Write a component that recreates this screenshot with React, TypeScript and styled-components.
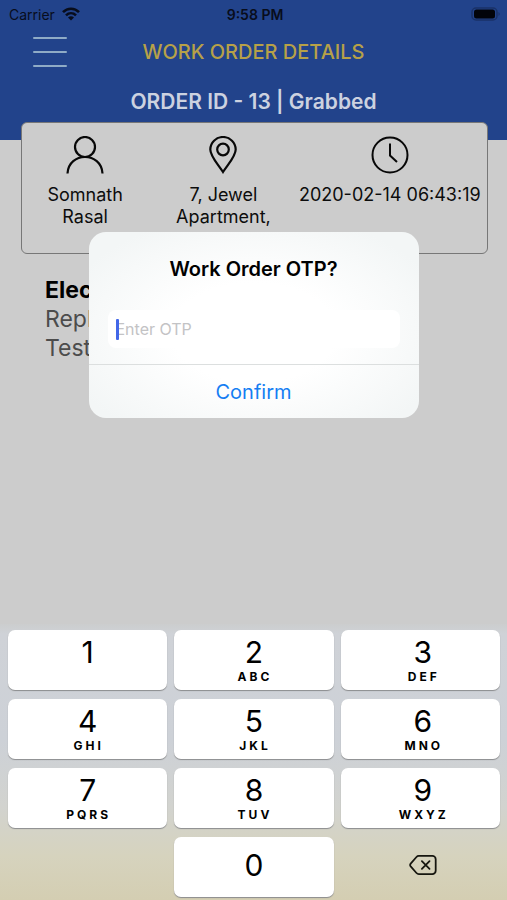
import React from 'react';
import styled, { createGlobalStyle } from 'styled-components';

const GlobalStyle = createGlobalStyle`
  * { box-sizing: border-box; }
  body {
    margin: 0;
    background: #cccccc;
    font-family: Inter, 'Liberation Sans', sans-serif;
    color: #0c0c0c;
  }
  button, input { font: inherit; color: inherit; }
  button { border: 0; padding: 0; background: none; cursor: pointer; }
  h1, h2, p { margin: 0; }
`;

const Screen = styled.div`
  min-height: 100vh;
  display: flex;
  flex-direction: column;
`;

const Content = styled.main`
  position: relative;
  flex: 1;
`;

const Header = styled.header`
  height: 140px;
  background: #22438b;
`;

const StatusBar = styled.div`
  display: grid;
  grid-template-columns: 1fr auto 1fr;
  align-items: center;
  height: 28px;
  padding: 0 6px 0 9px;
  font-size: 14px;
  color: #080d1c;
`;

const Carrier = styled.span`
  display: flex;
  align-items: center;
  gap: 7px;
`;

const Time = styled.span`
  font-weight: 600;
`;

const Battery = styled.svg`
  justify-self: end;
`;

const TitleBar = styled.div`
  display: grid;
  grid-template-columns: 36px 1fr 36px;
  align-items: center;
  height: 48px;
  padding: 0 32px;
`;

const MenuButton = styled.button`
  display: flex;
  flex-direction: column;
  align-items: center;
  gap: 12px;
`;

const MenuLine = styled.span`
  width: 34px;
  height: 2px;
  border-radius: 1px;
  background: #8fabc6;
`;

const Title = styled.h1`
  text-align: center;
  font-size: 20px;
  font-weight: 500;
  line-height: 24px;
  color: #b7a148;
`;

const OrderLine = styled.p`
  padding-top: 14px;
  text-align: center;
  font-size: 21px;
  font-weight: 600;
  line-height: 24px;
  color: #ccd2e0;
`;

const SummaryCard = styled.section`
  display: grid;
  grid-template-columns: 126fr 150fr 182fr;
  height: 132px;
  margin: -18px 19px 0 21px;
  padding-right: 6px;
  border: 1px solid #777777;
  border-radius: 6px;
  background: #cccccc;
`;

const SummaryItem = styled.div<{ $inset: number }>`
  display: flex;
  flex-direction: column;
  align-items: center;
  gap: 10px;
  padding: 13px ${(p) => p.$inset}px 0;
  text-align: center;
  font-size: 18px;
  line-height: 22px;
  white-space: ${(p) => (p.$inset ? 'normal' : 'nowrap')};
`;

const Job = styled.section`
  padding: 21px 45px;
  font-size: 23px;
  line-height: 29px;
  color: #4c4c4c;
`;

const JobTitle = styled.h2`
  font-size: 23px;
  font-weight: 700;
  line-height: 30px;
  color: #000000;
`;

const Overlay = styled.div`
  position: absolute;
  inset: 0;
  display: flex;
  align-items: center;
  justify-content: center;
  padding: 26px 0 0;
`;

const Dialog = styled.form`
  width: 330px;
  border-radius: 17px;
  overflow: hidden;
  background: radial-gradient(ellipse at 50% 54%, #ffffff 35%, #f3f6f6 85%);
`;

const DialogBody = styled.div`
  padding: 25px 19px 16px;
`;

const DialogTitle = styled.h2`
  margin-bottom: 29px;
  text-align: center;
  font-size: 20px;
  font-weight: 600;
  line-height: 24px;
  color: #000000;
`;

const Field = styled.label`
  position: relative;
  display: block;
  &::before {
    content: '';
    position: absolute;
    left: 8px;
    top: 9px;
    width: 3px;
    height: 21px;
    border-radius: 1px;
    background: #4267e8;
  }
`;

const OtpInput = styled.input`
  display: block;
  width: 100%;
  height: 38px;
  padding: 0 8px;
  border: 0;
  border-radius: 8px;
  outline: 0;
  background: #ffffff;
  font-size: 16px;
  caret-color: transparent;
  &::placeholder { color: #c3c3c5; opacity: 1; }
`;

const Confirm = styled.button`
  display: block;
  width: 100%;
  height: 54px;
  border-top: 1px solid #dcdfdf;
  font-size: 20px;
  color: #157ef3;
`;

const Keyboard = styled.div`
  display: grid;
  grid-template-columns: repeat(3, 1fr);
  grid-auto-rows: 60px;
  gap: 9px 7px;
  padding: 6px 7px 3px 8px;
  background: linear-gradient(#cccdce 0, #cfd2d7 10px, #cdd1d7 42%, #d2d3cf 66%, #d6d3be 84%, #d4ceb2 100%);
`;

const Key = styled.button`
  display: flex;
  flex-direction: column;
  align-items: center;
  justify-content: center;
  border-radius: 7px;
  background: #ffffff;
  box-shadow: 0 1px 1px #8b8c8e;
  color: #000000;
  &:nth-child(3n) { padding-left: 5px; }
`;

const Digit = styled.span`
  font-size: 30px;
  line-height: 33px;
`;

const Letters = styled.span`
  height: 15px;
  padding-left: 2px;
  font-size: 12px;
  font-weight: 700;
  line-height: 15px;
  letter-spacing: 3px;
`;

const ZeroKey = styled(Key)`
  padding-bottom: 3px;
`;

const DeleteKey = styled.button`
  display: flex;
  align-items: center;
  justify-content: center;
  padding: 0 0 4px 6px;
`;

const WifiIcon = () => (
  <svg width="18" height="14" viewBox="0 0 18 14" fill="none" stroke="#080d1c" strokeWidth="2.6" aria-hidden="true">
    <path d="M1 5.2C5.500 .6 12.500 .6 17 5.200" />
    <path d="M4 8.400C6.900 5.600 11.100 5.600 14 8.400" />
    <path d="M9 13.500 6 10.400C7.700 8.900 10.300 8.900 12 10.400Z" fill="#080d1c" stroke="none" />
  </svg>
);

const UserIcon = () => (
  <svg width="38" height="38" viewBox="0 0 38 38" fill="none" stroke="#080808" strokeWidth="2.2" aria-hidden="true">
    <circle cx="19" cy="11" r="10" />
    <path d="M1.500 37.500C2.500 15.500 35.500 15.500 36.500 37.500" />
  </svg>
);

const PinIcon = () => (
  <svg width="38" height="38" viewBox="0 0 38 38" fill="none" stroke="#080808" strokeWidth="2.200" aria-hidden="true">
    <path d="M19 36C14 28 6.300 20.500 6.300 13.500A12.700 12.500 0 0 1 31.700 13.500C31.700 20.500 24 28 19 36Z" />
    <circle cx="19" cy="13.500" r="5.800" />
  </svg>
);

const ClockIcon = () => (
  <svg width="38" height="38" viewBox="0 0 38 38" fill="none" stroke="#080808" strokeWidth="2" aria-hidden="true">
    <circle cx="19" cy="19" r="17.500" />
    <path d="M19 7.500V19.500L26 26" />
  </svg>
);

const DeleteIcon = () => (
  <svg width="28" height="22" viewBox="0 0 30 22" fill="none" stroke="#16160f" strokeWidth="1.900" strokeLinejoin="round" strokeLinecap="round" aria-hidden="true">
    <path d="M10.500 1.300H25A3.600 3.600 0 0 1 28.600 4.900V17.100A3.600 3.600 0 0 1 25 20.700H10.500Q9 20.700 8 19.600L1.800 12.500Q.6 11 1.800 9.500L8 2.400Q9 1.300 10.500 1.300Z" />
    <path d="M13.800 6.800L22 15.200M22 6.800L13.800 15.200" />
  </svg>
);

const keys: [string, string][] = [
  ['1', ''],
  ['2', 'ABC'],
  ['3', 'DEF'],
  ['4', 'GHI'],
  ['5', 'JKL'],
  ['6', 'MNO'],
  ['7', 'PQRS'],
  ['8', 'TUV'],
  ['9', 'WXYZ'],
];

export default function App() {
  return (
    <Screen>
      <GlobalStyle />
      <Content>
        <Header>
          <StatusBar>
            <Carrier>Carrier <WifiIcon /></Carrier>
            <Time>9:58 PM</Time>
            <Battery width="30" height="14" viewBox="0 0 30 14" aria-hidden="true">
              <rect x="1" y="1" width="25" height="12" rx="4" fill="none" stroke="#1a3268" strokeWidth="1.500" />
              <rect x="3" y="2.500" width="21" height="9" rx="2.500" fill="#02040a" />
              <path d="M27.500 5Q30 7 27.500 9Z" fill="#1a3268" />
            </Battery>
          </StatusBar>
          <TitleBar>
            <MenuButton aria-label="Menu">
              <MenuLine />
              <MenuLine />
              <MenuLine />
            </MenuButton>
            <Title>WORK ORDER DETAILS</Title>
          </TitleBar>
          <OrderLine>ORDER ID - 13 | Grabbed</OrderLine>
        </Header>
        <SummaryCard>
          <SummaryItem $inset={24}>
            <UserIcon />
            Somnath Rasal
          </SummaryItem>
          <SummaryItem $inset={24}>
            <PinIcon />
            7, Jewel Apartment,
          </SummaryItem>
          <SummaryItem $inset={0}>
            <ClockIcon />
            2020-02-14 06:43:19
          </SummaryItem>
        </SummaryCard>
        <Job>
          <JobTitle>Electrical</JobTitle>
          <p>Replace</p>
          <p>Test</p>
        </Job>
        <Overlay>
          <Dialog role="dialog" aria-labelledby="otp-title" onSubmit={(e) => e.preventDefault()}>
            <DialogBody>
              <DialogTitle id="otp-title">Work Order OTP?</DialogTitle>
              <Field>
                <OtpInput aria-label="Enter OTP" inputMode="numeric" placeholder="Enter OTP" />
              </Field>
            </DialogBody>
            <Confirm type="submit">Confirm</Confirm>
          </Dialog>
        </Overlay>
      </Content>
      <Keyboard>
        {keys.map(([digit, letters]) => (
          <Key key={digit}>
            <Digit>{digit}</Digit>
            <Letters>{letters}</Letters>
          </Key>
        ))}
        <span />
        <ZeroKey>
          <Digit>0</Digit>
        </ZeroKey>
        <DeleteKey aria-label="Delete">
          <DeleteIcon />
        </DeleteKey>
      </Keyboard>
    </Screen>
  );
}
